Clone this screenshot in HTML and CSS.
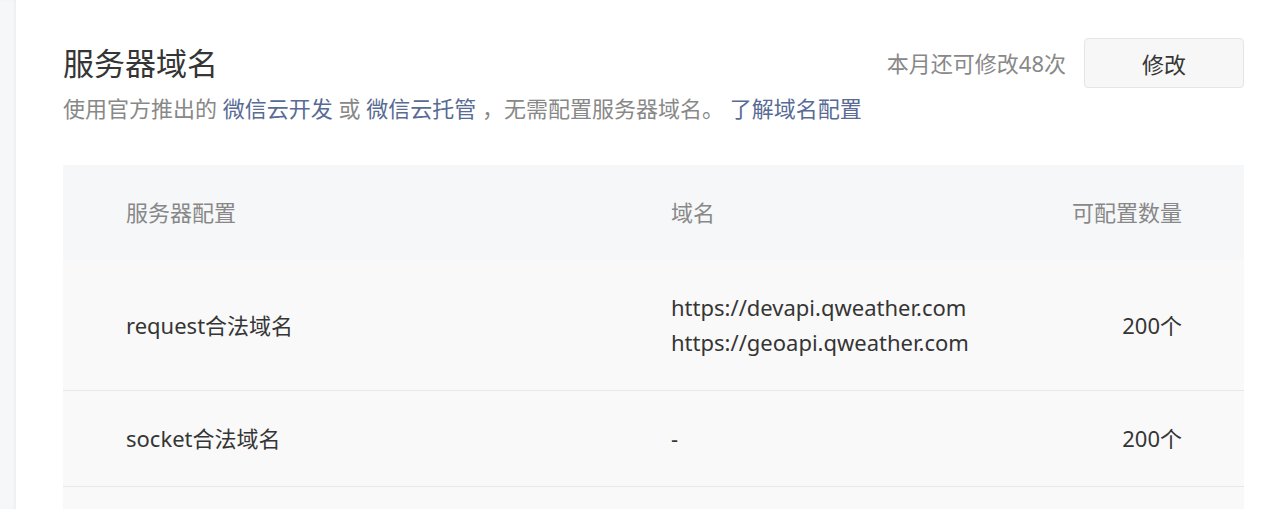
FILE: index.html
```html
<!DOCTYPE html>
<html lang="zh-CN">
<head>
<meta charset="utf-8">
<title>服务器域名</title>
<link rel="stylesheet" href="styles.css">
</head>
<body>
<div class="page">
  <div class="sidebar"></div>
  <main class="panel">
    <div class="head">
      <h1 class="title">服务器域名</h1>
      <div class="actions">
        <span class="quota">本月还可修改48次</span>
        <button class="btn">修改</button>
      </div>
    </div>
    <p class="desc">使用官方推出的 <a class="link">微信云开发</a> 或 <a class="link">微信云托管</a> ，无需配置服务器域名。 <a class="link">了解域名配置</a></p>
    <div class="table">
      <div class="row row-head">
        <div class="cell">服务器配置</div>
        <div class="cell">域名</div>
        <div class="cell num">可配置数量</div>
      </div>
      <div class="row">
        <div class="cell">request合法域名</div>
        <div class="cell">https://devapi.qweather.com<br>https://geoapi.qweather.com</div>
        <div class="cell num">200个</div>
      </div>
      <div class="row">
        <div class="cell">socket合法域名</div>
        <div class="cell">-</div>
        <div class="cell num">200个</div>
      </div>
      <div class="row">
        <div class="cell">&nbsp;</div>
        <div class="cell"></div>
        <div class="cell num"></div>
      </div>
    </div>
  </main>
</div>
</body>
</html>
```

FILE: styles.css
```css
* { box-sizing: border-box; }
html, body {
  margin: 0;
  padding: 0;
  background: #f6f7f9;
  font-family: "Noto Sans", "Noto Sans CJK SC", sans-serif;
  color: #353535;
  height: 509px;
  overflow: hidden;
}
.page {
  display: flex;
  height: 509px;
  overflow: hidden;
}
.sidebar {
  width: 16px;
  flex: none;
  background: #f6f7f9;
  box-shadow: inset -2px 0 2px rgba(0,0,0,0.03);
}
.panel {
  flex: 1;
  background: #fff;
  padding: 38px 39px 0 47px;
}
.head {
  display: flex;
  justify-content: space-between;
  align-items: center;
  height: 50px;
}
.title {
  margin: 0;
  font-size: 31px;
  font-weight: normal;
  line-height: 48px;
  color: #353535;
}
.actions {
  display: flex;
  align-items: center;
  gap: 18px;
}
.quota {
  font-size: 22px;
  color: #888;
  line-height: 30px;
}
.btn {
  width: 160px;
  height: 50px;
  border: 1px solid #e5e5e5;
  border-radius: 4px;
  background: #f7f7f7;
  font-family: inherit;
  font-size: 22px;
  color: #353535;
  padding: 0;
}
.desc {
  margin: 5px 0 0;
  font-size: 22px;
  line-height: 30px;
  color: #888;
}
.link {
  color: #576b95;
  text-decoration: none;
}
.table {
  margin-top: 42px;
}
.row {
  display: grid;
  grid-template-columns: 545px 1fr auto;
  align-items: center;
  min-height: 96px;
  padding: 30px 62px 30px 63px;
  background: #f9f9f9;
  border-bottom: 1px solid #e8e8e8;
  font-size: 22px;
  line-height: 35px;
}
.row-head {
  background: #f6f7f9;
  color: #888;
  height: 95px;
  min-height: 0;
  padding-top: 0;
  padding-bottom: 0;
  border-bottom: none;
}
.num {
  text-align: right;
}
```
